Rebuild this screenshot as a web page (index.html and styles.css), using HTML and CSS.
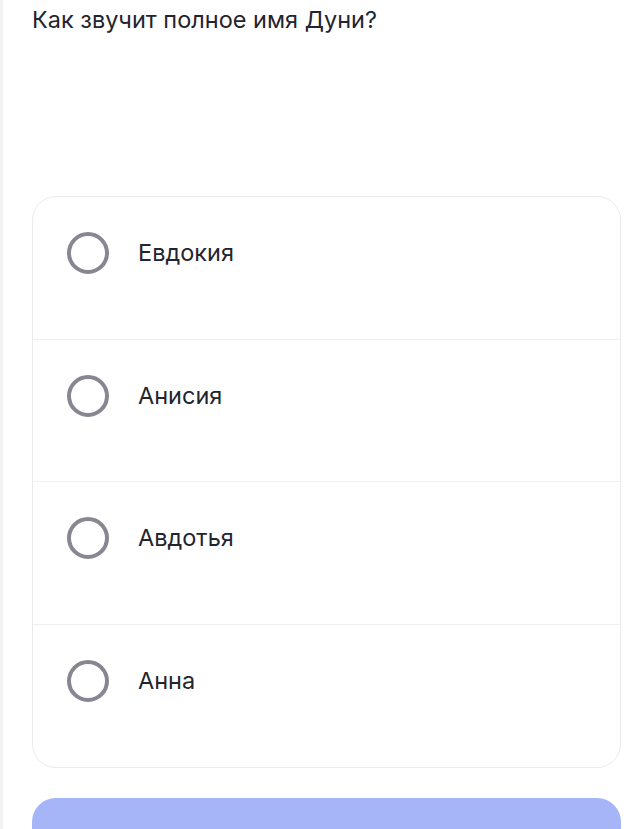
FILE: index.html
```html
<!DOCTYPE html>
<html lang="ru">
<head>
<meta charset="utf-8">
<link rel="stylesheet" href="styles.css">
</head>
<body>
<div class="page">
  <h1 class="question">Как звучит полное имя Дуни?</h1>
  <div class="options">
    <label class="option"><span class="radio"></span><span class="label">Евдокия</span></label>
    <label class="option"><span class="radio"></span><span class="label">Анисия</span></label>
    <label class="option"><span class="radio"></span><span class="label">Авдотья</span></label>
    <label class="option"><span class="radio"></span><span class="label">Анна</span></label>
  </div>
  <button class="submit" type="button"></button>
</div>
</body>
</html>
```
FILE: styles.css
```css
html, body {
  margin: 0;
  padding: 0;
  background: #ffffff;
}
body {
  font-family: Inter, "Noto Sans", sans-serif;
  color: #24242e;
  height: 829px;
  overflow: hidden;
}
.page {
  border-left: 3px solid #f2f2f2;
  padding: 4px 18px 0 29px;
  min-height: 829px;
  box-sizing: border-box;
}
.question {
  margin: 0;
  font-size: 23.5px;
  font-weight: 400;
  line-height: 32px;
  color: #24242e;
}
.options {
  margin-top: 160px;
  border: 1px solid #ebebee;
  border-radius: 24px;
  overflow: hidden;
}
.option {
  display: flex;
  gap: 29px;
  height: 142.5px;
  box-sizing: border-box;
  padding: 35px 0 0 34px;
  align-items: flex-start;
  border-bottom: 1px solid #efeff1;
}
.option:last-child {
  border-bottom: none;
}
.radio {
  width: 42px;
  height: 42px;
  box-sizing: border-box;
  border: 4px solid #878792;
  border-radius: 50%;
  flex: none;
}
.label {
  font-size: 23.5px;
  line-height: 42px;
  color: #24242e;
}
.submit {
  display: block;
  width: 100%;
  height: 64px;
  margin-top: 30px;
  border: none;
  border-radius: 24px;
  background: #a5b5f7;
}
```
